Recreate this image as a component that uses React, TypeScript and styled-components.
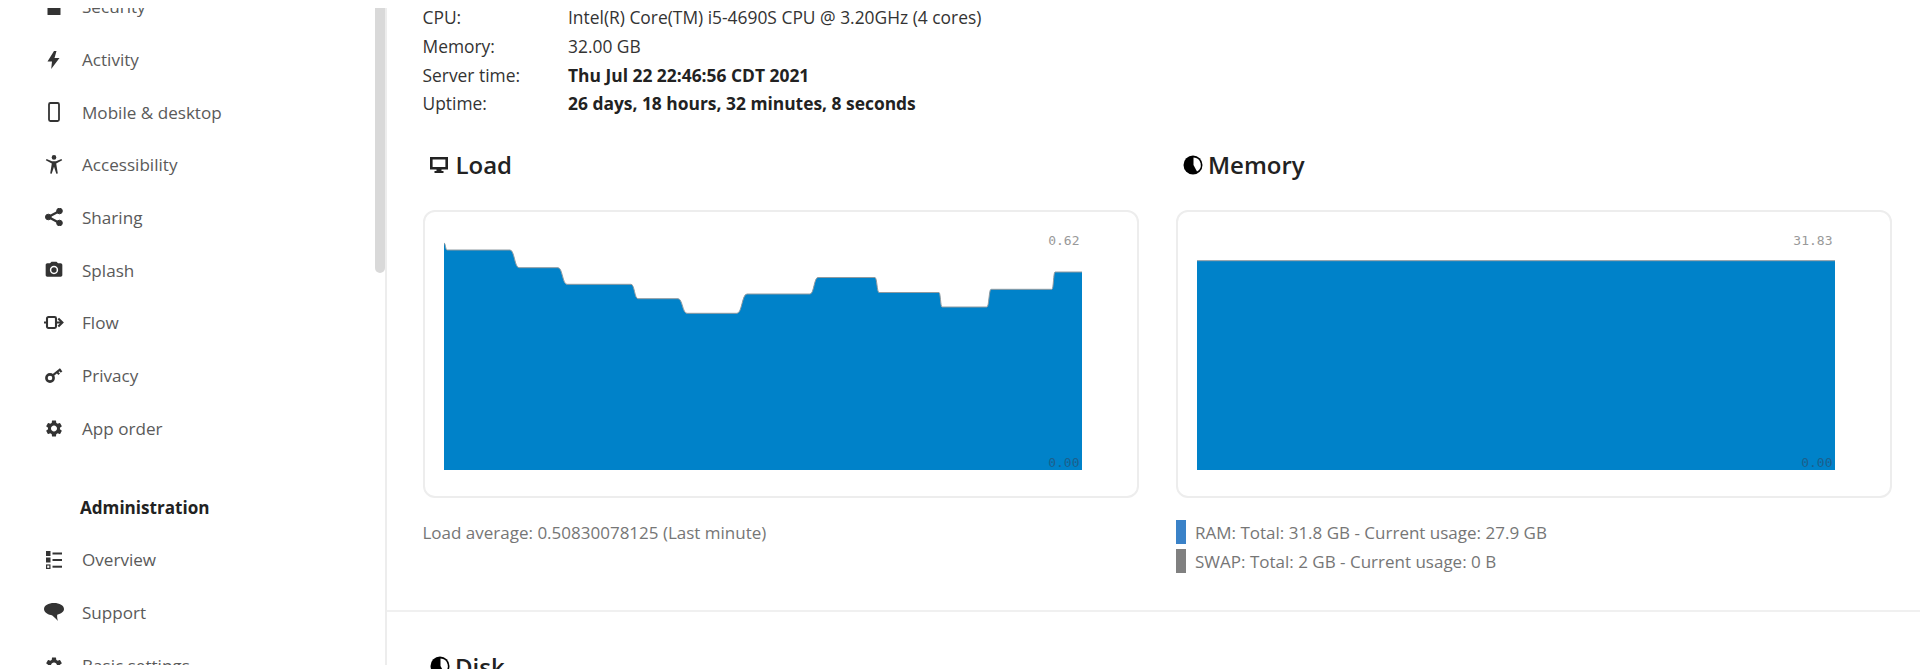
import React from 'react';
import styled, { createGlobalStyle } from 'styled-components';
import { MdPhotoCamera, MdSettings } from 'react-icons/md';

const GlobalStyle = createGlobalStyle`
  html, body {
    margin: 0;
    height: 669px;
    overflow: hidden;
    background: #fff;
    font-family: 'Open Sans', 'Liberation Sans', sans-serif;
    font-size: 17.400px;
    color: #222;
  }
`;

const BoltIcon = () => (
  <svg width="13" height="18" viewBox="0 0 13 18" fill="currentColor">
    <path d="M7 0 0.5 10.500H5L4.200 18 12.500 7H7.500L9.500 0z" />
  </svg>
);

const MobileIcon = () => (
  <svg width="12" height="20" viewBox="0 0 12 20" fill="none" stroke="currentColor" strokeWidth="1.800">
    <rect x="1" y="1" width="10" height="18" rx="1.400" />
  </svg>
);

const LockIcon = () => (
  <svg width="14" height="18" viewBox="0 0 14 18" fill="currentColor">
    <path d="M3.500 8V5a3.500 3.500 0 0 1 7 0v3h-2V5a1.500 1.500 0 0 0-3 0v3z" />
    <rect x="0.500" y="8" width="13" height="9" rx="0.600" />
  </svg>
);

const PersonIcon = () => (
  <svg width="18" height="19" viewBox="0 0 18 19" fill="currentColor">
    <circle cx="9" cy="2.400" r="2.300" />
    <path d="M0.800 5.200 1.600 4 7 6.200h4L16.400 4l.8 1.200L11.200 8.400 12.800 18.400l-1.500.3L9 11.800 6.700 18.700l-1.500-.3L6.800 8.400z" />
  </svg>
);

const ShareIcon = () => (
  <svg width="18" height="18" viewBox="0 0 18 18" fill="currentColor" stroke="currentColor">
    <circle cx="3.300" cy="9" r="2.800" />
    <circle cx="14.500" cy="3" r="2.800" />
    <circle cx="14.500" cy="15" r="2.800" />
    <path d="M3.300 9 14.500 3M3.300 9l11.200 6" fill="none" strokeWidth="2.400" />
  </svg>
);

const FlowIcon = () => (
  <svg width="20" height="15" viewBox="0 0 20 15" fill="none" stroke="currentColor" strokeWidth="2.100">
    <rect x="3" y="2" width="9" height="11" rx="1.400" />
    <path d="M0 7.500h3M12 7.500h6M14.300 3.400 18.400 7.500l-4.100 4.100" />
  </svg>
);

const KeyIcon = () => (
  <svg width="18" height="16" viewBox="0 0 18 16" fill="none" stroke="currentColor" strokeWidth="2.200">
    <circle cx="5" cy="11" r="3.600" strokeWidth="2.600" />
    <path d="M7.800 8.400 15.600 2M12 5l2.200 2.200M14.600 3l2 2" />
  </svg>
);

const ListIcon = () => (
  <svg width="16" height="18" viewBox="0 0 16 18" fill="currentColor">
    <rect x="0" y="0" width="4.500" height="5" />
    <rect x="0" y="6.500" width="4.500" height="5" />
    <rect x="0.600" y="14" width="3.300" height="3.400" fill="none" stroke="currentColor" strokeWidth="1.200" />
    <rect x="6.500" y="1.500" width="9.500" height="2" />
    <rect x="6.500" y="8" width="9.500" height="2" />
    <rect x="6.500" y="14.700" width="9.500" height="2" />
  </svg>
);

const BubbleIcon = () => (
  <svg width="20" height="18" viewBox="0 0 20 18" fill="currentColor">
    <path d="M10 0C4.500 0 0 2.500 0 6c0 3 3 5.300 7 6 1.500.3 4 2.800 7 6-.8-2-1-4-.8-6.300C17 10.800 20 8.800 20 6c0-3.500-4.500-6-10-6z" />
  </svg>
);

const MonitorIcon = () => (
  <svg width="18" height="16" viewBox="0 0 18 16" fill="currentColor">
    <path fillRule="evenodd" d="M0 0h18v12.500H11.500v1.500h2v2h-9v-2h2v-1.500H0zm2.600 2.600v7.300h12.800V2.600z" />
  </svg>
);

const PieSvg = styled.svg`
  margin-right: -2.500px;
`;

const PieIcon = () => (
  <PieSvg width="20" height="20" viewBox="0 0 20 20">
    <circle cx="10" cy="10" r="9.500" fill="#000" />
    <path d="M10.500 2.500A7.500 7.500 0 0 1 14 16.500L10.500 10z" fill="#fff" />
  </PieSvg>
);

const sideItems = [
  { label: 'Security', icon: <LockIcon /> },
  { label: 'Activity', icon: <BoltIcon /> },
  { label: 'Mobile & desktop', icon: <MobileIcon /> },
  { label: 'Accessibility', icon: <PersonIcon /> },
  { label: 'Sharing', icon: <ShareIcon /> },
  { label: 'Splash', icon: <MdPhotoCamera size={24} /> },
  { label: 'Flow', icon: <FlowIcon /> },
  { label: 'Privacy', icon: <KeyIcon /> },
  { label: 'App order', icon: <MdSettings size={25} /> },
];

const adminItems = [
  { label: 'Overview', icon: <ListIcon /> },
  { label: 'Support', icon: <BubbleIcon /> },
  { label: 'Basic settings', icon: <MdSettings size={25} /> },
];

const infoRows = [
  { name: 'CPU:', value: 'Intel(R) Core(TM) i5-4690S CPU @ 3.20GHz (4 cores)' },
  { name: 'Memory:', value: '32.00 GB' },
  { name: 'Server time:', value: 'Thu Jul 22 22:46:56 CDT 2021', strong: true },
  { name: 'Uptime:', value: '26 days, 18 hours, 32 minutes, 8 seconds', strong: true },
];

// plateaus of the load graph: [from x, to x, y] inside the 638x240 canvas
const loadSteps = [
  [3, 66, 20],
  [75, 114, 37.7],
  [123, 187, 54.3],
  [194, 234, 68.7],
  [243, 293, 83.3],
  [303, 366, 64],
  [374, 431, 47.5],
  [435, 495, 62.5],
  [498, 543, 77],
  [547, 608, 59.3],
  [611, 638, 42],
];

const loadLine = () => {
  let d = 'M0 13';
  let prevX = 0;
  let prevY = 13;
  loadSteps.forEach(([x0, x1, y]) => {
    const mid = (prevX + x0) / 2;
    d += ` C${mid} ${prevY} ${mid} ${y} ${x0} ${y} L${x1} ${y}`;
    prevX = x1;
    prevY = y;
  });
  return d;
};

const Graph = ({ line, max }: { line: string; max: string }) => (
  <Canvas>
    <svg width="638" height="240" viewBox="0 0 638 240">
      <path d={`${line} L638 240 L0 240 Z`} fill="#0082c9" />
      <path d={line} fill="none" stroke="#8f9aa0" strokeWidth="1" />
    </svg>
    <MaxLabel>{max}</MaxLabel>
    <MinLabel>0.00</MinLabel>
  </Canvas>
);

const App = () => {
  return (
    <Page>
      <GlobalStyle />
      <Sidebar>
        <SideList>
          {sideItems.map((item) => (
            <SideRow key={item.label}>
              <IconSlot>{item.icon}</IconSlot>
              {item.label}
            </SideRow>
          ))}
          <SideTitle>Administration</SideTitle>
          {adminItems.map((item) => (
            <SideRow key={item.label}>
              <IconSlot>{item.icon}</IconSlot>
              {item.label}
            </SideRow>
          ))}
        </SideList>
        <ScrollThumb />
      </Sidebar>
      <Main>
        <Section>
          <InfoTable>
            {infoRows.map((row) => (
              <React.Fragment key={row.name}>
                <InfoName>{row.name}</InfoName>
                <InfoValue $strong={row.strong}>{row.value}</InfoValue>
              </React.Fragment>
            ))}
          </InfoTable>
          <Columns>
            <div>
              <Heading>
                <MonitorIcon />
                Load
              </Heading>
              <Card>
                <Graph line={loadLine()} max="0.62" />
              </Card>
              <Legend>
                <LegendRow>Load average: 0.50830078125 (Last minute)</LegendRow>
              </Legend>
            </div>
            <div>
              <Heading>
                <PieIcon />
                Memory
              </Heading>
              <Card>
                <Graph line="M0 30.700 L638 30.700" max="31.83" />
              </Card>
              <Legend>
                <LegendRow>
                  <Swatch $color="#3a82c8" />
                  RAM: Total: 31.8 GB - Current usage: 27.9 GB
                </LegendRow>
                <LegendRow>
                  <Swatch $color="#808080" />
                  SWAP: Total: 2 GB - Current usage: 0 B
                </LegendRow>
              </Legend>
            </div>
          </Columns>
        </Section>
        <DiskSection>
          <Heading>
            <PieIcon />
            Disk
          </Heading>
        </DiskSection>
      </Main>
    </Page>
  );
};

const Page = styled.div`
  display: flex;
  align-items: flex-start;
  height: 669px;
  overflow: hidden;
`;

const Sidebar = styled.nav`
  position: relative;
  flex: none;
  box-sizing: border-box;
  width: 386.500px;
  height: 657px;
  margin-top: 8px;
  overflow: hidden;
  border-right: 2px solid #ededed;
  font-size: 17.100px;
`;

const SideList = styled.div`
  margin-top: -27.400px;
  padding-left: 43.500px;
`;

const SideRow = styled.div`
  display: flex;
  align-items: center;
  gap: 18.500px;
  height: 52.650px;
  color: #5a5a5a;
`;

const IconSlot = styled.span`
  display: flex;
  flex: none;
  align-items: center;
  justify-content: center;
  width: 20px;
  height: 20px;
  color: #333;
`;

const SideTitle = styled.div`
  display: flex;
  align-items: center;
  height: 52.650px;
  margin-top: 26.400px;
  padding-left: 36.500px;
  font-weight: 700;
  color: #222;
`;

const ScrollThumb = styled.div`
  position: absolute;
  top: 0;
  right: 0;
  width: 10px;
  height: 265px;
  border-radius: 0 0 5px 5px;
  background: #d9d9d9;
`;

const Main = styled.main`
  flex: 1;
  min-width: 0;
`;

const Section = styled.section`
  box-sizing: border-box;
  height: 612px;
  padding: 3px 0 0 36px;
  border-bottom: 2px solid #f0f0f0;
`;

const InfoTable = styled.div`
  display: grid;
  grid-template-columns: 145.500px 1fr;
  grid-auto-rows: 28.700px;
  align-items: center;
`;

const InfoName = styled.div`
  color: #333;
`;

const InfoValue = styled.div<{ $strong?: boolean }>`
  color: ${(p) => (p.$strong ? '#222' : '#333')};
  font-weight: ${(p) => (p.$strong ? 700 : 400)};
`;

const Columns = styled.div`
  display: grid;
  grid-template-columns: 716px 716px;
  gap: 37px;
  margin-top: 32px;
`;

const Heading = styled.h2`
  display: flex;
  align-items: center;
  gap: 7.500px;
  height: 30px;
  margin: 0;
  padding-left: 7.500px;
  font-size: 24px;
  font-weight: 600;
  color: #222;
`;

const Card = styled.div`
  box-sizing: border-box;
  height: 288px;
  margin-top: 30px;
  padding: 18px 0 0 19.500px;
  border: 2px solid #ededed;
  border-radius: 12px;
`;

const Canvas = styled.div`
  position: relative;
  width: 638px;
  height: 240px;
  svg {
    display: block;
  }
`;

const MaxLabel = styled.span`
  position: absolute;
  top: 4px;
  right: 2.500px;
  font: 13px/14px 'DejaVu Sans Mono', monospace;
  color: #999;
`;

const MinLabel = styled(MaxLabel)`
  top: auto;
  bottom: 0;
  color: #1c5f8c;
`;

const Legend = styled.div`
  margin-top: 20px;
  font-size: 17px;
`;

const LegendRow = styled.div`
  display: flex;
  align-items: center;
  gap: 9.500px;
  height: 29px;
  color: #767676;
`;

const Swatch = styled.span<{ $color: string }>`
  flex: none;
  width: 10px;
  height: 24px;
  background: ${(p) => p.$color};
`;

const DiskSection = styled.section`
  padding: 39px 0 0 36px;
`;

export default App;
